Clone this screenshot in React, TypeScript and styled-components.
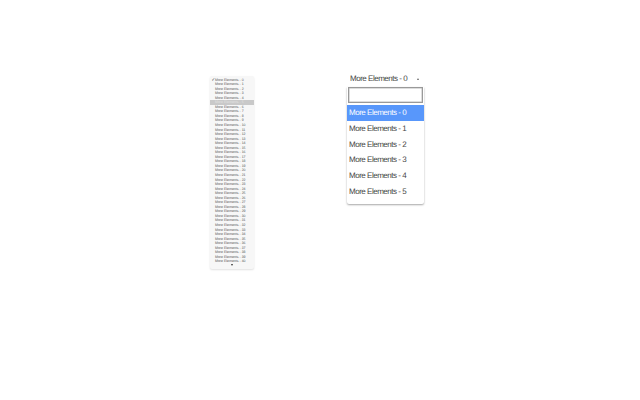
import React from "react"
import styled, { createGlobalStyle } from "styled-components"

const GlobalStyle = createGlobalStyle`
  html, body {
    margin: 0;
    background: #fff;
  }
`

const nativeItems = Array.from({ length: 41 }, (_, i) => i)
const dropdownItems = [0, 1, 2, 3, 4, 5]

export default function App() {
  return (
    <>
      <GlobalStyle />
      <Page>
        <NativeMenu>
          {nativeItems.map((i) => (
            <NativeRow key={i} $hovered={i === 5}>
              <Check>{i === 0 ? "✓" : ""}</Check>
              More Elements - {i}
            </NativeRow>
          ))}
          <MoreArrow />
        </NativeMenu>
        <Select>
          <SelectHeader>
            <span>More Elements - 0</span>
            <Caret />
          </SelectHeader>
          <Dropdown>
            <SearchBox />
            <Options>
              {dropdownItems.map((i) => (
                <OptionRow key={i} $active={i === 0}>
                  More Elements - {i}
                </OptionRow>
              ))}
            </Options>
          </Dropdown>
        </Select>
      </Page>
    </>
  )
}

const Page = styled.div`
  width: 640px;
  height: 400px;
  box-sizing: border-box;
  padding: 72px 0 0 210px;
  display: flex;
  align-items: flex-start;
  gap: 93px;
  font-family: "Liberation Sans", Arial, sans-serif;
  text-rendering: geometricPrecision;
  opacity: 0.999;
  overflow: hidden;
`

const NativeMenu = styled.div`
  width: 44px;
  height: 193px;
  margin-top: 4px;
  box-sizing: border-box;
  padding-top: 1.5px;
  background: #f7f7f7;
  border-radius: 2px;
  box-shadow: 0 1px 2px rgba(0, 0, 0, 0.12);
  display: flex;
  flex-direction: column;
  align-items: stretch;
`

const NativeRow = styled.div<{ $hovered: boolean }>`
  height: 4.56px;
  line-height: 4.56px;
  font-size: 3.5px;
  white-space: nowrap;
  display: flex;
  color: ${(p) => (p.$hovered ? "#e2e2e2" : "#555")};
  background: ${(p) => (p.$hovered ? "#c9c9c9" : "transparent")};
`

const Check = styled.span`
  width: 5px;
  padding-left: 1.5px;
  box-sizing: border-box;
  font-size: 4.5px;
  color: #111;
`

const MoreArrow = styled.div`
  width: 0;
  height: 0;
  margin: 0.5px auto 0;
  border-left: 1.5px solid transparent;
  border-right: 1.5px solid transparent;
  border-top: 2px solid #333;
`

const Select = styled.div`
  width: 77px;
  display: flex;
  flex-direction: column;
`

const SelectHeader = styled.div`
  height: 15px;
  box-sizing: border-box;
  padding: 0 5px 2px 3px;
  display: flex;
  align-items: center;
  justify-content: space-between;
  font-size: 8px;
  letter-spacing: -0.48px;
  color: #444;
  white-space: nowrap;
`

const Caret = styled.div`
  width: 0;
  height: 0;
  border-left: 1.5px solid transparent;
  border-right: 1.5px solid transparent;
  border-bottom: 2px solid #666;
`

const Dropdown = styled.div`
  height: 117px;
  background: #fff;
  border-radius: 0 0 2px 2px;
  box-shadow: 0 1px 2px rgba(0, 0, 0, 0.35);
  display: flex;
  flex-direction: column;
`

const SearchBox = styled.div`
  height: 16px;
  margin: 0 1px 2px;
  box-sizing: border-box;
  background: #fff;
  border: 1px solid #999;
  box-shadow: inset 0 0 0 0.5px #bbb;
`

const Options = styled.div`
  display: flex;
  flex-direction: column;
`

const OptionRow = styled.div<{ $active: boolean }>`
  height: 15.8px;
  line-height: 16.8px;
  padding-left: 2px;
  font-size: 8px;
  letter-spacing: -0.48px;
  white-space: nowrap;
  color: ${(p) => (p.$active ? "#fff" : "#444")};
  background: ${(p) => (p.$active ? "#5897fb" : "transparent")};
`
